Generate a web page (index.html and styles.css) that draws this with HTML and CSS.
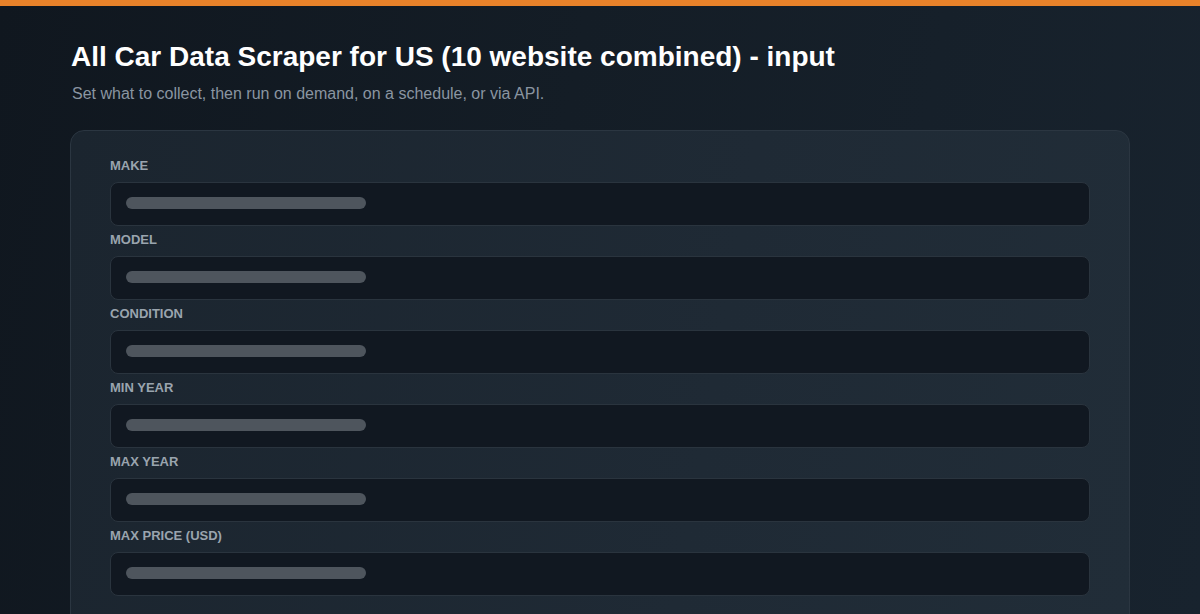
FILE: index.html
```html
<!DOCTYPE html>
<html lang="en">
<head>
<meta charset="utf-8">
<title>All Car Data Scraper for US - input</title>
<link rel="stylesheet" href="styles.css">
</head>
<body>
<div class="topbar"></div>
<main class="page">
  <h1 class="title">All Car Data Scraper for US (10 website combined) - input</h1>
  <p class="subtitle">Set what to collect, then run on demand, on a schedule, or via API.</p>
  <section class="card">
    <div class="field">
      <div class="label">MAKE</div>
      <div class="input"><span class="ph"></span></div>
    </div>
    <div class="field">
      <div class="label">MODEL</div>
      <div class="input"><span class="ph"></span></div>
    </div>
    <div class="field">
      <div class="label">CONDITION</div>
      <div class="input"><span class="ph"></span></div>
    </div>
    <div class="field">
      <div class="label">MIN YEAR</div>
      <div class="input"><span class="ph"></span></div>
    </div>
    <div class="field">
      <div class="label">MAX YEAR</div>
      <div class="input"><span class="ph"></span></div>
    </div>
    <div class="field">
      <div class="label">MAX PRICE (USD)</div>
      <div class="input"><span class="ph"></span></div>
    </div>
  </section>
</main>
</body>
</html>
```
FILE: styles.css
```css
html, body {
  margin: 0;
  padding: 0;
  height: 100%;
  overflow: hidden;
}
body {
  background: linear-gradient(100deg, #10171f 0%, #141d26 45%, #18232e 100%);
  font-family: "Liberation Sans", Arial, Helvetica, sans-serif;
  color: #ffffff;
}
.topbar {
  height: 6px;
  background: #e8822a;
}
.page {
  padding: 0 70px;
}
.title {
  margin: 0;
  padding: 35px 0 0 1px;
  font-size: 28px;
  line-height: 32px;
  font-weight: 700;
  color: #ffffff;
}
.subtitle {
  margin: 11px 0 0 2px;
  font-size: 16px;
  line-height: 20px;
  color: #8a95a1;
}
.card {
  margin-top: 26px;
  background: linear-gradient(100deg, #1b252f 0%, #1f2a35 60%, #212d38 100%);
  border: 1px solid #2b3641;
  border-radius: 14px;
  padding: 27px 39px 40px 39px;
  display: flex;
  flex-direction: column;
  gap: 6px;
}
.field {
  display: flex;
  flex-direction: column;
  gap: 8px;
}
.label {
  font-size: 13px;
  line-height: 16px;
  font-weight: 700;
  color: #9aa4ae;
}
.input {
  box-sizing: border-box;
  height: 44px;
  background: #111821;
  border: 1px solid #2a343e;
  border-radius: 8px;
  display: flex;
  align-items: center;
  padding: 0 0 2px 15px;
}
.ph {
  width: 240px;
  height: 12px;
  border-radius: 6px;
  background: #4e555d;
}
```
